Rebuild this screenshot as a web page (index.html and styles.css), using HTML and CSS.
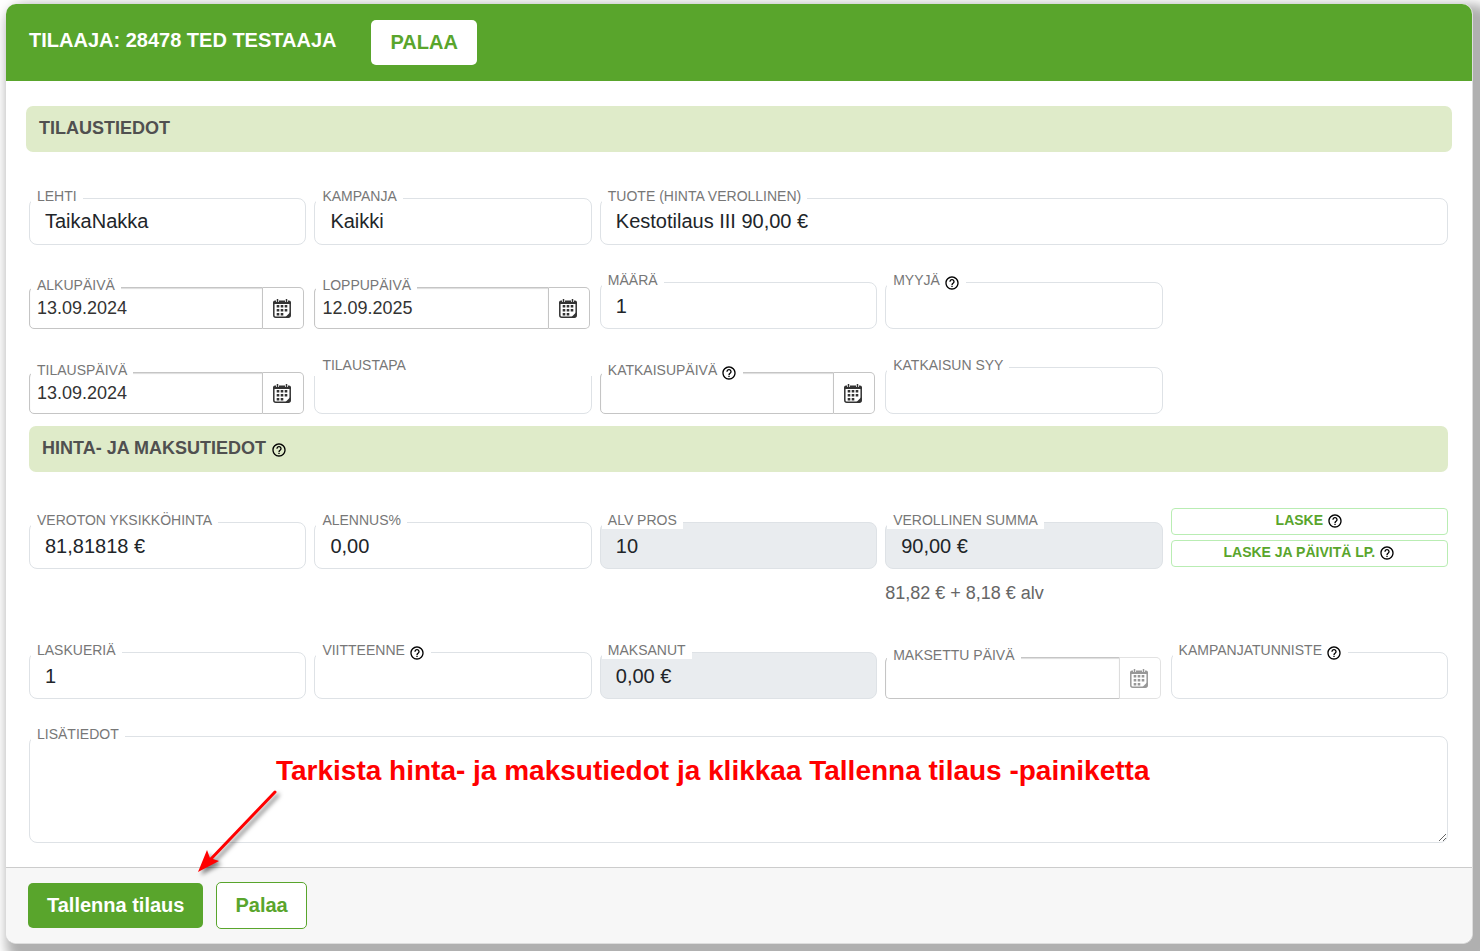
FILE: index.html
```html
<!DOCTYPE html>
<html lang="fi">
<head>
<meta charset="utf-8">
<title>Tilaaja: 28478 Ted Testaaja</title>
<link rel="stylesheet" href="styles.css">
</head>
<body>
<svg class="defs" aria-hidden="true">
  <symbol id="help" viewBox="0 0 24 24"><path d="M11 18h2v-2h-2v2zm1-16C6.480 2 2 6.480 2 12s4.480 10 10 10 10-4.480 10-10S17.520 2 12 2zm0 18c-4.410 0-8-3.590-8-8s3.590-8 8-8 8 3.590 8 8-3.590 8-8 8zm0-14c-2.210 0-4 1.790-4 4h2c0-1.100.9-2 2-2s2 .9 2 2c0 2-3 1.750-3 5h2c0-2.250 3-2.500 3-5 0-2.210-1.790-4-4-4z" fill="#000"/></symbol>
  <symbol id="calendar" viewBox="0 0 18 19">
    <rect x=".8" y="3" width="16.400" height="15.200" rx="2" fill="#fff" stroke="#333" stroke-width="1.500"/>
    <path d="M0 5V3.500a2 2 0 0 1 2-2h14a2 2 0 0 1 2 2V5z" fill="#333"/>
    <path d="M4.500 0v3M13.500 0v3" stroke="#fff" stroke-width="3"/>
    <path d="M4.500 0v3M13.500 0v3" stroke="#333" stroke-width="1.500"/>
    <path d="M3.700 6h2.600v2.600H3.700zM7.700 6h2.600v2.600H7.700zM11.700 6h2.600v2.600h-2.600zM3.700 10h2.600v2.600H3.700zM7.700 10h2.600v2.600H7.700zM11.700 10h2.600v2.600h-2.600zM3.700 14h2.600v2.600H3.700zM7.700 14h2.600v2.600H7.700z" fill="#333"/>
    <path d="M17.500 13v3.500a2 2 0 0 1-2 2H12z" fill="#333"/>
  </symbol>
</svg>
<main class="panel">
  <header class="panel-header">
    <h1 class="panel-title">TILAAJA: 28478 TED TESTAAJA</h1>
    <button class="btn btn-white" type="button">PALAA</button>
  </header>
  <form class="panel-form">
    <div class="panel-body">
      <h2 class="section section-wide">TILAUSTIEDOT</h2>
      <div class="row row-first">
        <div class="field"><label class="label" for="lehti">LEHTI</label><select class="control" id="lehti"><option>TaikaNakka</option></select></div>
        <div class="field"><label class="label" for="kampanja">KAMPANJA</label><select class="control" id="kampanja"><option>Kaikki</option></select></div>
        <div class="field span-3"><label class="label" for="tuote">TUOTE (HINTA VEROLLINEN)</label><select class="control" id="tuote"><option>Kestotilaus III 90,00 €</option></select></div>
      </div>
      <div class="row">
        <div class="field date"><label class="label" for="alku">ALKUPÄIVÄ</label><input class="date-input" id="alku" type="text" value="13.09.2024"><button class="date-btn" type="button" aria-label="Valitse alkupäivä"><svg class="cal"><use href="#calendar"/></svg></button></div>
        <div class="field date"><label class="label" for="loppu">LOPPUPÄIVÄ</label><input class="date-input" id="loppu" type="text" value="12.09.2025"><button class="date-btn" type="button" aria-label="Valitse loppupäivä"><svg class="cal"><use href="#calendar"/></svg></button></div>
        <div class="field"><label class="label" for="maara">MÄÄRÄ</label><input class="control" id="maara" type="text" value="1"></div>
        <div class="field"><label class="label" for="myyja">MYYJÄ <svg class="help"><use href="#help"/></svg></label><input class="control" id="myyja" type="text"></div>
      </div>
      <div class="row row-third">
        <div class="field date"><label class="label" for="tilauspaiva">TILAUSPÄIVÄ</label><input class="date-input" id="tilauspaiva" type="text" value="13.09.2024"><button class="date-btn" type="button" aria-label="Valitse tilauspäivä"><svg class="cal"><use href="#calendar"/></svg></button></div>
        <div class="field"><label class="label label-full" for="tapa">TILAUSTAPA</label><select class="control" id="tapa"><option></option></select></div>
        <div class="field date"><label class="label" for="katkaisu">KATKAISUPÄIVÄ <svg class="help"><use href="#help"/></svg></label><input class="date-input" id="katkaisu" type="text"><button class="date-btn" type="button" aria-label="Valitse katkaisupäivä"><svg class="cal"><use href="#calendar"/></svg></button></div>
        <div class="field"><label class="label" for="syy">KATKAISUN SYY</label><input class="control" id="syy" type="text"></div>
      </div>
      <h2 class="section section-inner">HINTA- JA MAKSUTIEDOT <svg class="help"><use href="#help"/></svg></h2>
      <div class="row row-price">
        <div class="field"><label class="label" for="veroton">VEROTON YKSIKKÖHINTA</label><input class="control" id="veroton" type="text" value="81,81818 €"></div>
        <div class="field"><label class="label" for="alennus">ALENNUS%</label><input class="control" id="alennus" type="text" value="0,00"></div>
        <div class="field"><label class="label" for="alv">ALV PROS</label><input class="control readonly" id="alv" type="text" value="10" readonly></div>
        <div class="field"><label class="label" for="summa">VEROLLINEN SUMMA</label><input class="control readonly" id="summa" type="text" value="90,00 €" readonly><p class="hint">81,82 € + 8,18 € alv</p></div>
        <div class="calc">
          <button class="calc-btn" type="button">LASKE <svg class="help"><use href="#help"/></svg></button>
          <button class="calc-btn" type="button">LASKE JA PÄIVITÄ LP. <svg class="help"><use href="#help"/></svg></button>
        </div>
      </div>
      <div class="row row-invoice">
        <div class="field"><label class="label" for="eria">LASKUERIÄ</label><input class="control" id="eria" type="text" value="1"></div>
        <div class="field"><label class="label" for="viite">VIITTEENNE <svg class="help"><use href="#help"/></svg></label><input class="control" id="viite" type="text"></div>
        <div class="field"><label class="label" for="maksanut">MAKSANUT</label><input class="control readonly" id="maksanut" type="text" value="0,00 €" readonly></div>
        <div class="field date date-off"><label class="label" for="maksettu">MAKSETTU PÄIVÄ</label><input class="date-input" id="maksettu" type="text" readonly><button class="date-btn" type="button" disabled aria-label="Valitse maksupäivä"><svg class="cal"><use href="#calendar"/></svg></button></div>
        <div class="field"><label class="label" for="tunniste">KAMPANJATUNNISTE <svg class="help"><use href="#help"/></svg></label><input class="control" id="tunniste" type="text"></div>
      </div>
      <div class="row">
        <div class="field span-5"><label class="label" for="lisa">LISÄTIEDOT</label><textarea class="control notes" id="lisa"></textarea></div>
      </div>
    </div>
    <footer class="panel-footer">
      <button class="btn btn-green" type="submit">Tallenna tilaus</button>
      <button class="btn btn-outline" type="button">Palaa</button>
      <div class="callout">
        <p class="callout-text">Tarkista hinta- ja maksutiedot ja klikkaa Tallenna tilaus -painiketta</p>
        <svg class="callout-arrow" viewBox="0 0 90 96" aria-hidden="true"><path d="M79 4L13 73" stroke="#f00" stroke-width="3" stroke-linecap="round"/><path d="M2 84L11 62 14 70 23 73z" fill="#f00"/></svg>
      </div>
    </footer>
  </form>
</main>
</body>
</html>
```
FILE: styles.css
```css
* { box-sizing: border-box; }

body {
  margin: 0;
  padding: 4px 7px 8px 6px;
  background: #fff;
  font-family: "Liberation Sans", Arial, sans-serif;
  color: #212529;
}

.defs { display: none; }

button, input, select, textarea { font-family: inherit; }

h1, h2, p { margin: 0; }

.panel {
  border-right: 1px solid #ddd;
  border-bottom: 1px solid #ddd;
  border-radius: 10px;
  background: #fff;
  box-shadow: 10px 10px 12px 10px #b0b0b0;
}

.panel-header {
  display: flex;
  align-items: flex-start;
  gap: 35px;
  padding: 16px 23px;
  border-radius: 10px 10px 0 0;
  background: #59a52c;
}

.panel-title {
  font-size: 20px;
  line-height: 40px;
  color: #fff;
}

.btn {
  height: 45px;
  padding: 0 19px;
  border: 0;
  border-radius: 5px;
  font-size: 20px;
  font-weight: bold;
}

.btn-white { background: #fff; color: #59a52c; }
.btn-green { background: #59a52c; color: #fff; }

.btn-outline {
  height: 47px;
  padding: 0 18px;
  border: 1px solid #59a52c;
  background: #fff;
  color: #59a52c;
}

.panel-body { padding: 25px 24px 24px 23px; }

.section {
  height: 46px;
  padding: 0 13px;
  border-radius: 7px;
  background: #dfebc9;
  color: #505050;
  font-size: 18px;
  line-height: 44px;
}

.section-wide { margin: 0 -4px 0 -3px; }
.section-inner { margin-top: 12px; }

.help {
  width: 16px;
  height: 16px;
  vertical-align: -4px;
}

.row {
  display: grid;
  grid-template-columns: repeat(5, minmax(0, 1fr));
  gap: 8px;
  align-items: end;
  margin-top: 37px;
}

.row-first { margin-top: 46px; }
.row-third { margin-top: 38px; }
.row-price { margin-top: 36px; align-items: start; }
.row-price .field { margin-top: 14px; }
.row-invoice { margin-top: 47px; }

.span-3 { grid-column: span 3; }
.span-5 { grid-column: span 5; }

.field { position: relative; }

.label {
  position: absolute;
  top: -10px;
  left: 2px;
  padding: 0 6px;
  background: #fff;
  color: #777;
  font-size: 14px;
  line-height: 17px;
  white-space: nowrap;
}

.label .help { margin: -2px 0; }

.label-full {
  left: 0;
  right: 0;
  padding: 0 8px 2px;
}

.control {
  display: block;
  width: 100%;
  height: 47px;
  padding: 2px 15px 0;
  border: 1px solid #dee2e6;
  border-radius: 8px;
  background: #fff;
  color: #212529;
  font-size: 20px;
  appearance: none;
}

select.control { padding: 0 15px 2px; }

.readonly { background: #e9ecef; }

.notes {
  height: 107px;
  padding: 12px 15px;
  resize: vertical;
}

.date {
  display: flex;
  height: 42px;
  padding-right: 2px;
}

.date-input {
  flex: 1;
  min-width: 0;
  padding: 0 7px;
  border: 1px solid #c5c5c5;
  border-radius: 5px 0 0 5px;
  background: #fff;
  box-shadow: inset 0 1px 1px #ddd;
  color: #333;
  font-size: 18px;
}

.date-btn {
  display: flex;
  align-items: center;
  justify-content: center;
  width: 41px;
  padding: 0 2px 0 0;
  border: 1px solid #c5c5c5;
  border-left: 0;
  border-radius: 0 5px 5px 0;
  background: #fff;
}

.cal { width: 18px; height: 19px; }

.date-off .date-btn { border-color: #e2e2e2; }
.date-off .date-input { border-right-color: #ddd; }
.date-off .cal { opacity: 0.5; }

.hint {
  margin-top: 12px;
  color: #666;
  font-size: 18px;
  line-height: 24px;
}

.calc { display: grid; gap: 5px; }

.calc-btn {
  height: 27px;
  padding: 0 0 2px;
  border: 1px solid #b9edb3;
  border-radius: 4px;
  background: #fff;
  color: #59a52c;
  font-size: 14px;
  font-weight: bold;
}

.panel-footer {
  position: relative;
  display: flex;
  align-items: center;
  gap: 13px;
  padding: 14px 22px;
  border-top: 1px solid #ccc;
  border-radius: 0 0 10px 10px;
  background: #f7f7f7;
}

/* Instruction pointing at the save button, laid over the form */
.callout {
  position: absolute;
  top: -114px;
  left: 190px;
  pointer-events: none;
}

.callout-text {
  padding-left: 80px;
  color: #f00;
  font-size: 28px;
  font-weight: bold;
  line-height: 34px;
  white-space: nowrap;
}

.callout-arrow {
  display: block;
  width: 90px;
  height: 96px;
  filter: drop-shadow(3px 3px 2px rgba(0, 0, 0, 0.5));
}
```
